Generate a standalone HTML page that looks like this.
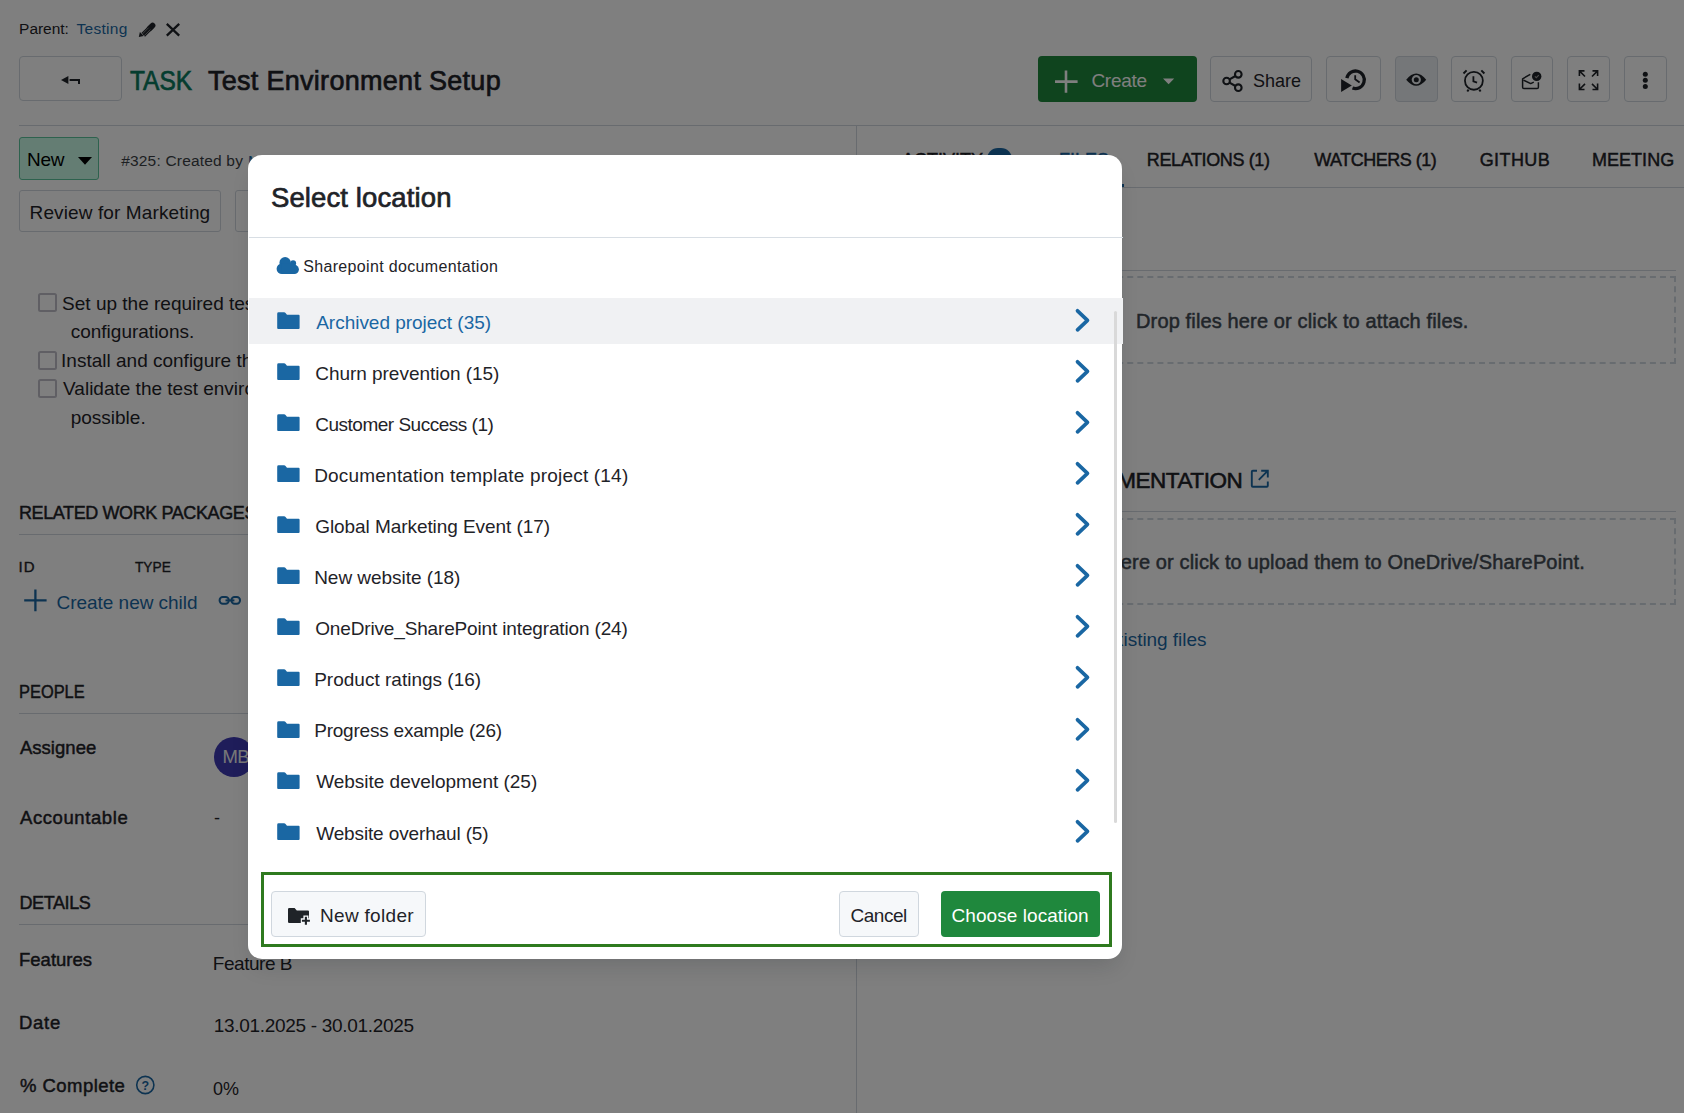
<!DOCTYPE html>
<html><head><meta charset="utf-8"><title>Select location</title>
<style>
html,body{margin:0;padding:0;}
body{width:1684px;height:1113px;overflow:hidden;position:relative;background:#fff;font-family:'Liberation Sans', sans-serif;}
.a{position:absolute;}
.t{position:absolute;white-space:nowrap;}
svg.a{overflow:visible}
</style></head><body>
<div class="t" id="parent" style="left:19.10px;top:21px;font-size:15.5px;line-height:15.5px;font-weight:400;color:#1f2328;letter-spacing:-0.033px;">Parent:</div>
<div class="t" id="testing" style="left:76.40px;top:21px;font-size:15.5px;line-height:15.5px;font-weight:400;color:#1a67a3;letter-spacing:0.317px;">Testing</div>
<svg class="a" style="left:134px;top:18px" width="24" height="24" viewBox="0 0 24 24"><path d="M9.2 16.9 L17.6 8.5" stroke="#1f2328" stroke-width="5.2"/><path d="M15.6 10.5 L18.6 7.5" stroke="#1f2328" stroke-width="5.6" stroke-linecap="round"/><path d="M10.0 17.9 L16.4 11.5 M8.2 16.1 L14.6 9.7" stroke="#9a9a9a" stroke-width="0.8"/><path d="M4.8 19 L5.9 14.1 L9.7 17.9 Z" fill="#1f2328"/></svg>
<svg class="a" style="left:160px;top:18px" width="24" height="24" viewBox="0 0 24 24"><path d="M6.8 5.8 L19.2 17.6 M19.2 5.8 L6.8 17.6" stroke="#1f2328" stroke-width="2.3"/></svg>
<div class="a" style="left:19px;top:56px;width:103px;height:45px;box-sizing:border-box;border:1px solid #d0d7de;border-radius:4px;background:#fff"></div>
<svg class="a" style="left:55px;top:68px" width="32" height="24" viewBox="0 0 32 24"><path d="M6 12 L13.4 8 L13.4 16 Z" fill="#1f2328"/><path d="M14.6 12 H24 V16" fill="none" stroke="#1f2328" stroke-width="2"/></svg>
<div class="t" id="task" style="left:130.00px;top:68px;font-size:27px;line-height:27px;font-weight:400;-webkit-text-stroke:0.68px currentColor;color:#0a7a5e;transform:scaleX(0.905);transform-origin:0 0;">TASK</div>
<div class="t" id="title" style="left:208.00px;top:68px;font-size:27px;line-height:27px;font-weight:400;-webkit-text-stroke:0.68px currentColor;color:#1f2328;letter-spacing:0.286px;">Test Environment Setup</div>
<div class="a" style="left:1038px;top:56px;width:159px;height:46px;background:#1f883d;border-radius:4px"></div>
<svg class="a" style="left:1050px;top:64px" width="32" height="34" viewBox="0 0 32 34"><path d="M16 6.5 V28.8 M5 17.6 H27.6" stroke="#fff" stroke-width="2.6"/></svg>
<div class="t" id="create" style="left:1091.40px;top:71px;font-size:19px;line-height:19px;font-weight:400;color:#ffffff;letter-spacing:-0.280px;">Create</div>
<svg class="a" style="left:1160px;top:74px" width="18" height="14" viewBox="0 0 18 14"><path d="M3 4.5 H14.2 L8.6 10.2 Z" fill="#fff"/></svg>
<div class="a" style="left:1210px;top:56px;width:102px;height:46px;box-sizing:border-box;border:1px solid #d0d7de;border-radius:4px;background:#fff"></div>
<svg class="a" style="left:1218px;top:66px" width="28" height="30" viewBox="0 0 28 30"><g fill="none" stroke="#1f2328" stroke-width="2.1"><circle cx="20.3" cy="8.3" r="3.3"/><circle cx="8.6" cy="15" r="3.3"/><circle cx="20.3" cy="21.7" r="3.3"/><path d="M11.5 13.4 L17.4 10 M11.5 16.6 L17.4 20"/></g></svg>
<div class="t" id="share" style="left:1252.60px;top:71px;font-size:19px;line-height:19px;font-weight:400;color:#1f2328;transform:scaleX(0.9469);transform-origin:0 0;">Share</div>
<div class="a" style="left:1326px;top:56px;width:55px;height:46px;box-sizing:border-box;border:1px solid #d0d7de;border-radius:4px;background:#fff"></div>
<div class="a" style="left:1395px;top:56px;width:43px;height:46px;box-sizing:border-box;border:1px solid #d0d7de;border-radius:4px;background:#eaeef2"></div>
<div class="a" style="left:1451px;top:56px;width:46px;height:46px;box-sizing:border-box;border:1px solid #d0d7de;border-radius:4px;background:#fff"></div>
<div class="a" style="left:1511px;top:56px;width:42px;height:46px;box-sizing:border-box;border:1px solid #d0d7de;border-radius:4px;background:#fff"></div>
<div class="a" style="left:1567px;top:56px;width:43px;height:46px;box-sizing:border-box;border:1px solid #d0d7de;border-radius:4px;background:#fff"></div>
<div class="a" style="left:1624px;top:56px;width:43px;height:46px;box-sizing:border-box;border:1px solid #d0d7de;border-radius:4px;background:#fff"></div>
<svg class="a" style="left:1335px;top:64px" width="40" height="34" viewBox="0 0 40 34"><path d="M11.86 14.12 A8.8 8.8 0 1 1 17.49 24.07" fill="none" stroke="#1f2328" stroke-width="3.3"/><path d="M6.1 15 L6.1 28.1 L16.8 21.4 Z" fill="#1f2328"/><path d="M20.2 11.3 V15.2 L24.6 18.4" fill="none" stroke="#1f2328" stroke-width="1.8"/></svg>
<svg class="a" style="left:1400px;top:64px" width="34" height="32" viewBox="0 0 34 32"><path d="M6.2 15.7 Q16.2 3.4 26.2 15.7 Q16.2 28 6.2 15.7 Z" fill="#1f2328"/><circle cx="16.3" cy="15.7" r="4.6" fill="#eaeef2"/><circle cx="16.3" cy="15.7" r="2.5" fill="#1f2328"/></svg>
<svg class="a" style="left:1456px;top:64px" width="36" height="34" viewBox="0 0 36 34"><g fill="none" stroke="#1f2328" stroke-width="1.8"><circle cx="17.9" cy="16.8" r="8.95"/><path d="M17.4 12.2 V17.3 L21.1 18.6"/><path d="M7.5 9.5 L10.6 6.4 M25.3 6.4 L28.4 9.5 M12.6 25.6 L11.3 27.5 M23.3 25.6 L24.6 27.5" stroke-width="2"/></g></svg>
<svg class="a" style="left:1514px;top:64px" width="36" height="32" viewBox="0 0 36 32"><g fill="none" stroke="#1f2328" stroke-width="1.5" stroke-linejoin="round"><path d="M16.3 10.3 L8.6 14.8 V23.3 Q8.6 24.6 9.9 24.6 H23.1 Q24.4 24.6 24.4 23.3 V18.2"/><path d="M9.4 16.1 L16.7 19.6 L19.8 18.1"/></g><circle cx="22.7" cy="12.4" r="4.7" fill="#1f2328"/><path d="M20.9 12.4 L22.3 13.7 L24.8 11.2" fill="none" stroke="#999" stroke-width="1.1"/></svg>
<svg class="a" style="left:1572px;top:64px" width="32" height="32" viewBox="0 0 32 32"><g fill="none" stroke="#1f2328" stroke-width="1.6"><path d="M7.4 12 V6.9 H12.5 M7.4 6.9 L13 12.5"/><path d="M20.5 6.9 H25.6 V12 M25.6 6.9 L20 12.5"/><path d="M7.4 19.4 V25.5 H12.5 M7.4 25.5 L13 19.9"/><path d="M25.6 19.4 V25.5 H20.5 M25.6 25.5 L20 19.9"/></g></svg>
<svg class="a" style="left:1636px;top:64px" width="18" height="32" viewBox="0 0 18 32"><circle cx="9.3" cy="10.3" r="2.5" fill="#1f2328"/><circle cx="9.3" cy="16.3" r="2.5" fill="#1f2328"/><circle cx="9.3" cy="22.4" r="2.5" fill="#1f2328"/></svg>
<div class="a" style="left:19px;top:125px;width:1665px;height:1px;background:#d0d7de"></div>
<div class="a" style="left:856px;top:125px;width:1px;height:988px;background:#d0d7de"></div>
<div class="a" style="left:19px;top:137px;width:80px;height:43px;box-sizing:border-box;border:1px solid #5cc49c;border-radius:3px;background:#c8fbe6"></div>
<div class="t" id="new" style="left:27.00px;top:150px;font-size:19px;line-height:19px;font-weight:400;color:#000;letter-spacing:-0.250px;">New</div>
<svg class="a" style="left:74px;top:152px" width="22" height="18" viewBox="0 0 22 18"><path d="M4 5 H18 L11 12.8 Z" fill="#000"/></svg>
<div class="t" id="created" style="left:121.20px;top:153px;font-size:15.5px;line-height:15.5px;font-weight:400;color:#3a3f45;letter-spacing:0.187px;">#325: Created by</div>
<div class="t" style="left:248.00px;top:153px;font-size:15.5px;line-height:15.5px;font-weight:400;color:#1a67a3;">M</div>
<div class="a" style="left:19px;top:190px;width:202px;height:41.5px;box-sizing:border-box;border:1px solid #d0d7de;border-radius:3px;background:#fff"></div>
<div class="t" id="review" style="left:29.60px;top:203px;font-size:19px;line-height:19px;font-weight:400;color:#1f2328;letter-spacing:0.111px;">Review for Marketing</div>
<div class="a" style="left:235px;top:190px;width:150px;height:41.5px;box-sizing:border-box;border:1px solid #d0d7de;border-radius:3px;background:#fff"></div>
<div class="t" style="left:247.50px;top:203px;font-size:19px;line-height:19px;font-weight:400;color:#1f2328;">Sprint 1</div>
<div class="a" style="left:38.2px;top:293.4px;width:18.5px;height:18.5px;box-sizing:border-box;border:2px solid #c0bfc9;border-radius:2.5px;background:#fff"></div>
<div class="a" style="left:38.2px;top:351px;width:18.5px;height:18.5px;box-sizing:border-box;border:2px solid #c0bfc9;border-radius:2.5px;background:#fff"></div>
<div class="a" style="left:38.2px;top:379.2px;width:18.5px;height:18.5px;box-sizing:border-box;border:2px solid #c0bfc9;border-radius:2.5px;background:#fff"></div>
<div class="t" id="chk1" style="left:62.10px;top:294px;font-size:19px;line-height:19px;font-weight:400;color:#1f2328;">Set up the required test servers, databases and</div>
<div class="t" id="chk1b" style="left:70.70px;top:322px;font-size:19px;line-height:19px;font-weight:400;color:#1f2328;">configurations.</div>
<div class="t" id="chk2" style="left:61.10px;top:351px;font-size:19px;line-height:19px;font-weight:400;color:#1f2328;">Install and configure the software under test.</div>
<div class="t" id="chk3" style="left:63.10px;top:379px;font-size:19px;line-height:19px;font-weight:400;color:#1f2328;">Validate the test environment as early as</div>
<div class="t" id="chk3b" style="left:70.70px;top:408px;font-size:19px;line-height:19px;font-weight:400;color:#1f2328;">possible.</div>
<div class="t" id="related" style="left:19.00px;top:504px;font-size:18px;line-height:18px;font-weight:400;-webkit-text-stroke:0.45px currentColor;color:#1f2328;letter-spacing:-0.400px;"><span id="relA">RELATED WORK PACKAGE</span>S</div>
<div class="a" style="left:19px;top:534px;width:837px;height:1px;background:#d0d7de"></div>
<div class="t" id="idh" style="left:18.60px;top:559px;font-size:15px;line-height:15px;font-weight:400;-webkit-text-stroke:0.38px currentColor;color:#1f2328;letter-spacing:1.100px;">ID</div>
<div class="t" id="typeh" style="left:135.40px;top:559px;font-size:15px;line-height:15px;font-weight:400;-webkit-text-stroke:0.38px currentColor;color:#1f2328;transform:scaleX(0.9128);transform-origin:0 0;">TYPE</div>
<svg class="a" style="left:20px;top:586px" width="32" height="30" viewBox="0 0 32 30"><path d="M35.4 0 Z" /><path d="M15.4 3.6 V25.2 M4.2 14.4 H26.6" stroke="#1a67a3" stroke-width="2.3"/></svg>
<div class="t" id="cnc" style="left:56.60px;top:593px;font-size:19px;line-height:19px;font-weight:400;color:#1a67a3;letter-spacing:-0.040px;">Create new child</div>
<svg class="a" style="left:212px;top:590px" width="36" height="22" viewBox="0 0 36 22"><g fill="none" stroke="#1a67a3" stroke-width="2"><rect x="7.6" y="7" width="9.2" height="6.7" rx="3.2"/><rect x="19.4" y="7" width="8.6" height="6.7" rx="3.2"/></g><path d="M13.5 10.4 H22.4" stroke="#1a67a3" stroke-width="2"/></svg>
<div class="t" id="people" style="left:19.20px;top:683px;font-size:18px;line-height:18px;font-weight:400;-webkit-text-stroke:0.45px currentColor;color:#1f2328;transform:scaleX(0.9113);transform-origin:0 0;">PEOPLE</div>
<div class="a" style="left:19px;top:713px;width:837px;height:1px;background:#d0d7de"></div>
<div class="t" id="assignee" style="left:19.90px;top:739px;font-size:18.5px;line-height:18.5px;font-weight:400;-webkit-text-stroke:0.46px currentColor;color:#1f2328;letter-spacing:0.043px;">Assignee</div>
<div class="a" style="left:214.2px;top:736.8px;width:40px;height:40px;border-radius:50%;background:#3f3ab5"></div>
<div class="t" style="left:222.50px;top:748px;font-size:18.5px;line-height:18.5px;font-weight:400;color:#f0f0f0;letter-spacing:-0.600px;">MB</div>
<div class="t" id="acc" style="left:20.00px;top:809px;font-size:18.5px;line-height:18.5px;font-weight:400;-webkit-text-stroke:0.46px currentColor;color:#1f2328;letter-spacing:0.590px;">Accountable</div>
<div class="t" style="left:214.00px;top:809px;font-size:18px;line-height:18px;font-weight:400;color:#1f2328;">-</div>
<div class="t" id="details" style="left:19.40px;top:894px;font-size:18px;line-height:18px;font-weight:400;-webkit-text-stroke:0.45px currentColor;color:#1f2328;letter-spacing:-0.383px;">DETAILS</div>
<div class="a" style="left:19px;top:924px;width:837px;height:1px;background:#d0d7de"></div>
<div class="t" id="features" style="left:19.00px;top:951px;font-size:18.5px;line-height:18.5px;font-weight:400;-webkit-text-stroke:0.46px currentColor;color:#1f2328;">Features</div>
<div class="t" id="featb" style="left:212.80px;top:954px;font-size:19px;line-height:19px;font-weight:400;color:#1f2328;letter-spacing:-0.462px;">Feature B</div>
<div class="t" id="datel" style="left:19.00px;top:1014px;font-size:18.5px;line-height:18.5px;font-weight:400;-webkit-text-stroke:0.46px currentColor;color:#1f2328;letter-spacing:0.700px;">Date</div>
<div class="t" id="date" style="left:213.80px;top:1016px;font-size:19px;line-height:19px;font-weight:400;color:#1f2328;letter-spacing:-0.314px;">13.01.2025 - 30.01.2025</div>
<div class="t" id="pct" style="left:20.00px;top:1077px;font-size:18.5px;line-height:18.5px;font-weight:400;-webkit-text-stroke:0.46px currentColor;color:#1f2328;letter-spacing:0.456px;">% Complete</div>
<svg class="a" style="left:130px;top:1070px" width="32" height="32" viewBox="0 0 32 32"><circle cx="15.3" cy="15" r="8.6" fill="none" stroke="#1a67a3" stroke-width="1.6"/><text x="15.3" y="19.6" text-anchor="middle" font-family="Liberation Sans" font-weight="700" font-size="12.5" fill="#1a67a3">?</text></svg>
<div class="t" id="zero" style="left:212.70px;top:1079px;font-size:19px;line-height:19px;font-weight:400;color:#1f2328;transform:scaleX(0.9462);transform-origin:0 0;">0%</div>
<div class="t" style="left:902.00px;top:151px;font-size:18px;line-height:18px;font-weight:400;-webkit-text-stroke:0.45px currentColor;color:#1f2328;">ACTIVITY</div>
<div class="a" style="left:987px;top:148px;width:25px;height:22px;border-radius:11px;background:#1a67a3"></div>
<div class="t" style="left:1059.00px;top:151px;font-size:18px;line-height:18px;font-weight:400;-webkit-text-stroke:0.45px currentColor;color:#1a67a3;">FILES</div>
<div class="a" style="left:1040px;top:184px;width:84px;height:3px;background:#1a67a3"></div>
<div class="t" id="relations" style="left:1146.80px;top:151px;font-size:18px;line-height:18px;font-weight:400;-webkit-text-stroke:0.45px currentColor;color:#1f2328;letter-spacing:-0.383px;">RELATIONS (1)</div>
<div class="t" id="watchers" style="left:1314.20px;top:151px;font-size:18px;line-height:18px;font-weight:400;-webkit-text-stroke:0.45px currentColor;color:#1f2328;letter-spacing:-0.491px;">WATCHERS (1)</div>
<div class="t" id="github" style="left:1479.70px;top:151px;font-size:18px;line-height:18px;font-weight:400;-webkit-text-stroke:0.45px currentColor;color:#1f2328;letter-spacing:0.400px;">GITHUB</div>
<div class="t" id="meeting" style="left:1591.90px;top:151px;font-size:18px;line-height:18px;font-weight:400;-webkit-text-stroke:0.45px currentColor;color:#1f2328;letter-spacing:0.050px;">MEETING</div>
<div class="a" style="left:857px;top:187px;width:827px;height:1px;background:#d0d7de"></div>
<div class="a" style="left:876px;top:270px;width:800px;height:1px;background:#d0d7de"></div>
<div class="a" style="left:876px;top:276px;width:800px;height:88px;box-sizing:border-box;border:2px dashed #d1d9e0"></div>
<div class="t" id="drop" style="left:1136.00px;top:311px;font-size:20px;line-height:20px;font-weight:400;-webkit-text-stroke:0.50px currentColor;color:#424a53;letter-spacing:0.140px;">Drop files here or click to attach files.</div>
<div class="t" id="spdoc" style="left:905.60px;top:470px;font-size:22.5px;line-height:22.5px;font-weight:400;-webkit-text-stroke:0.56px currentColor;color:#1f2328;letter-spacing:-0.450px;">SHAREPOINT DOCUMENTATION</div>
<svg class="a" style="left:1246px;top:465px" width="28" height="28" viewBox="0 0 28 28"><path d="M11 5.8 H6.8 Q5.8 5.8 5.8 6.8 V20.8 Q5.8 21.8 6.8 21.8 H20.8 Q21.8 21.8 21.8 20.8 V16.5" fill="none" stroke="#1a67a3" stroke-width="1.9"/><path d="M12.8 14.8 L21.4 6.2 M15.2 5.8 H21.8 V12.4" fill="none" stroke="#1a67a3" stroke-width="1.9"/></svg>
<div class="a" style="left:876px;top:511px;width:800px;height:1px;background:#d0d7de"></div>
<div class="a" style="left:876px;top:518px;width:800px;height:87px;box-sizing:border-box;border:2px dashed #d1d9e0"></div>
<div class="t" id="upload" style="left:1018.00px;top:552px;font-size:20px;line-height:20px;font-weight:400;-webkit-text-stroke:0.50px currentColor;color:#424a53;letter-spacing:0.140px;">Drop files here or click to upload them to OneDrive/SharePoint.</div>
<div class="t" id="link" style="left:1063.70px;top:630px;font-size:19px;line-height:19px;font-weight:400;color:#1a67a3;letter-spacing:-0.050px;">Link existing files</div>
<div class="a" style="left:0px;top:0px;width:1684px;height:1113px;background:rgba(0,0,0,0.5)"></div>
<div class="a" id="modal" style="left:248.2px;top:154.5px;width:874px;height:804px;background:#fff;border-radius:14px;box-shadow:0 12px 22px -6px rgba(20,24,28,0.16)"></div>
<div class="a" style="left:248.5px;top:237px;width:874px;height:1px;background:#d8dee4"></div>
<div class="a" style="left:248.5px;top:298px;width:874px;height:46px;background:#f0f1f3"></div>
<div class="t" id="mtitle" style="left:271.00px;top:184px;font-size:27.5px;line-height:27.5px;font-weight:400;-webkit-text-stroke:0.69px currentColor;color:#1f2328;letter-spacing:0.114px;">Select location</div>
<svg class="a" style="left:272px;top:252px" width="32" height="28" viewBox="0 0 32 28"><g fill="#1a67a3"><circle cx="13.1" cy="10.7" r="5.7"/><circle cx="21.1" cy="11.2" r="3"/><circle cx="22.3" cy="17.4" r="4.6"/><circle cx="9.9" cy="16.7" r="5.3"/><rect x="9.9" y="11.5" width="12.4" height="10.5"/></g></svg>
<div class="t" id="crumb" style="left:303.20px;top:259px;font-size:16px;line-height:16px;font-weight:400;color:#1f2328;letter-spacing:0.339px;">Sharepoint documentation</div>
<svg class="a" style="left:272px;top:306.0px" width="32" height="28" viewBox="0 0 32 28"><path d="M6.6 6.3 H12.2 Q12.9 6.3 13.3 6.8 L15 8.7 H26.6 Q27.6 8.7 27.6 9.7 V22.1 Q27.6 23.1 26.6 23.1 H6.2 Q5.2 23.1 5.2 22.1 V7.7 Q5.2 6.3 6.6 6.3 Z" fill="#1a67a3"/></svg>
<div class="t" id="row0" style="left:316.20px;top:313px;font-size:19px;line-height:19px;font-weight:400;color:#1a67a3;letter-spacing:-0.020px;">Archived project (35)</div>
<svg class="a" style="left:1068px;top:304.0px" width="30" height="32" viewBox="0 0 30 32"><path d="M9.5 6.8 L19.5 16.3 L9.5 25.8" fill="none" stroke="#1a67a3" stroke-width="3.7" stroke-linecap="round" stroke-linejoin="round"/></svg>
<svg class="a" style="left:272px;top:357.07px" width="32" height="28" viewBox="0 0 32 28"><path d="M6.6 6.3 H12.2 Q12.9 6.3 13.3 6.8 L15 8.7 H26.6 Q27.6 8.7 27.6 9.7 V22.1 Q27.6 23.1 26.6 23.1 H6.2 Q5.2 23.1 5.2 22.1 V7.7 Q5.2 6.3 6.6 6.3 Z" fill="#1a67a3"/></svg>
<div class="t" id="row1" style="left:315.20px;top:364px;font-size:19px;line-height:19px;font-weight:400;color:#1f2328;letter-spacing:-0.030px;">Churn prevention (15)</div>
<svg class="a" style="left:1068px;top:355.07px" width="30" height="32" viewBox="0 0 30 32"><path d="M9.5 6.8 L19.5 16.3 L9.5 25.8" fill="none" stroke="#1a67a3" stroke-width="3.7" stroke-linecap="round" stroke-linejoin="round"/></svg>
<svg class="a" style="left:272px;top:408.14px" width="32" height="28" viewBox="0 0 32 28"><path d="M6.6 6.3 H12.2 Q12.9 6.3 13.3 6.8 L15 8.7 H26.6 Q27.6 8.7 27.6 9.7 V22.1 Q27.6 23.1 26.6 23.1 H6.2 Q5.2 23.1 5.2 22.1 V7.7 Q5.2 6.3 6.6 6.3 Z" fill="#1a67a3"/></svg>
<div class="t" id="row2" style="left:315.20px;top:415px;font-size:19px;line-height:19px;font-weight:400;color:#1f2328;letter-spacing:-0.489px;">Customer Success (1)</div>
<svg class="a" style="left:1068px;top:406.14px" width="30" height="32" viewBox="0 0 30 32"><path d="M9.5 6.8 L19.5 16.3 L9.5 25.8" fill="none" stroke="#1a67a3" stroke-width="3.7" stroke-linecap="round" stroke-linejoin="round"/></svg>
<svg class="a" style="left:272px;top:459.21px" width="32" height="28" viewBox="0 0 32 28"><path d="M6.6 6.3 H12.2 Q12.9 6.3 13.3 6.8 L15 8.7 H26.6 Q27.6 8.7 27.6 9.7 V22.1 Q27.6 23.1 26.6 23.1 H6.2 Q5.2 23.1 5.2 22.1 V7.7 Q5.2 6.3 6.6 6.3 Z" fill="#1a67a3"/></svg>
<div class="t" id="row3" style="left:314.20px;top:466px;font-size:19px;line-height:19px;font-weight:400;color:#1f2328;letter-spacing:0.197px;">Documentation template project (14)</div>
<svg class="a" style="left:1068px;top:457.21px" width="30" height="32" viewBox="0 0 30 32"><path d="M9.5 6.8 L19.5 16.3 L9.5 25.8" fill="none" stroke="#1a67a3" stroke-width="3.7" stroke-linecap="round" stroke-linejoin="round"/></svg>
<svg class="a" style="left:272px;top:510.28px" width="32" height="28" viewBox="0 0 32 28"><path d="M6.6 6.3 H12.2 Q12.9 6.3 13.3 6.8 L15 8.7 H26.6 Q27.6 8.7 27.6 9.7 V22.1 Q27.6 23.1 26.6 23.1 H6.2 Q5.2 23.1 5.2 22.1 V7.7 Q5.2 6.3 6.6 6.3 Z" fill="#1a67a3"/></svg>
<div class="t" id="row4" style="left:315.20px;top:517px;font-size:19px;line-height:19px;font-weight:400;color:#1f2328;letter-spacing:-0.065px;">Global Marketing Event (17)</div>
<svg class="a" style="left:1068px;top:508.28px" width="30" height="32" viewBox="0 0 30 32"><path d="M9.5 6.8 L19.5 16.3 L9.5 25.8" fill="none" stroke="#1a67a3" stroke-width="3.7" stroke-linecap="round" stroke-linejoin="round"/></svg>
<svg class="a" style="left:272px;top:561.35px" width="32" height="28" viewBox="0 0 32 28"><path d="M6.6 6.3 H12.2 Q12.9 6.3 13.3 6.8 L15 8.7 H26.6 Q27.6 8.7 27.6 9.7 V22.1 Q27.6 23.1 26.6 23.1 H6.2 Q5.2 23.1 5.2 22.1 V7.7 Q5.2 6.3 6.6 6.3 Z" fill="#1a67a3"/></svg>
<div class="t" id="row5" style="left:314.20px;top:568px;font-size:19px;line-height:19px;font-weight:400;color:#1f2328;letter-spacing:-0.040px;">New website (18)</div>
<svg class="a" style="left:1068px;top:559.35px" width="30" height="32" viewBox="0 0 30 32"><path d="M9.5 6.8 L19.5 16.3 L9.5 25.8" fill="none" stroke="#1a67a3" stroke-width="3.7" stroke-linecap="round" stroke-linejoin="round"/></svg>
<svg class="a" style="left:272px;top:612.42px" width="32" height="28" viewBox="0 0 32 28"><path d="M6.6 6.3 H12.2 Q12.9 6.3 13.3 6.8 L15 8.7 H26.6 Q27.6 8.7 27.6 9.7 V22.1 Q27.6 23.1 26.6 23.1 H6.2 Q5.2 23.1 5.2 22.1 V7.7 Q5.2 6.3 6.6 6.3 Z" fill="#1a67a3"/></svg>
<div class="t" id="row6" style="left:315.20px;top:619px;font-size:19px;line-height:19px;font-weight:400;color:#1f2328;letter-spacing:-0.151px;">OneDrive_SharePoint integration (24)</div>
<svg class="a" style="left:1068px;top:610.42px" width="30" height="32" viewBox="0 0 30 32"><path d="M9.5 6.8 L19.5 16.3 L9.5 25.8" fill="none" stroke="#1a67a3" stroke-width="3.7" stroke-linecap="round" stroke-linejoin="round"/></svg>
<svg class="a" style="left:272px;top:663.49px" width="32" height="28" viewBox="0 0 32 28"><path d="M6.6 6.3 H12.2 Q12.9 6.3 13.3 6.8 L15 8.7 H26.6 Q27.6 8.7 27.6 9.7 V22.1 Q27.6 23.1 26.6 23.1 H6.2 Q5.2 23.1 5.2 22.1 V7.7 Q5.2 6.3 6.6 6.3 Z" fill="#1a67a3"/></svg>
<div class="t" id="row7" style="left:314.20px;top:670px;font-size:19px;line-height:19px;font-weight:400;color:#1f2328;letter-spacing:0.005px;">Product ratings (16)</div>
<svg class="a" style="left:1068px;top:661.49px" width="30" height="32" viewBox="0 0 30 32"><path d="M9.5 6.8 L19.5 16.3 L9.5 25.8" fill="none" stroke="#1a67a3" stroke-width="3.7" stroke-linecap="round" stroke-linejoin="round"/></svg>
<svg class="a" style="left:272px;top:714.56px" width="32" height="28" viewBox="0 0 32 28"><path d="M6.6 6.3 H12.2 Q12.9 6.3 13.3 6.8 L15 8.7 H26.6 Q27.6 8.7 27.6 9.7 V22.1 Q27.6 23.1 26.6 23.1 H6.2 Q5.2 23.1 5.2 22.1 V7.7 Q5.2 6.3 6.6 6.3 Z" fill="#1a67a3"/></svg>
<div class="t" id="row8" style="left:314.20px;top:721px;font-size:19px;line-height:19px;font-weight:400;color:#1f2328;letter-spacing:-0.215px;">Progress example (26)</div>
<svg class="a" style="left:1068px;top:712.56px" width="30" height="32" viewBox="0 0 30 32"><path d="M9.5 6.8 L19.5 16.3 L9.5 25.8" fill="none" stroke="#1a67a3" stroke-width="3.7" stroke-linecap="round" stroke-linejoin="round"/></svg>
<svg class="a" style="left:272px;top:765.63px" width="32" height="28" viewBox="0 0 32 28"><path d="M6.6 6.3 H12.2 Q12.9 6.3 13.3 6.8 L15 8.7 H26.6 Q27.6 8.7 27.6 9.7 V22.1 Q27.6 23.1 26.6 23.1 H6.2 Q5.2 23.1 5.2 22.1 V7.7 Q5.2 6.3 6.6 6.3 Z" fill="#1a67a3"/></svg>
<div class="t" id="row9" style="left:316.20px;top:772px;font-size:19px;line-height:19px;font-weight:400;color:#1f2328;letter-spacing:-0.017px;">Website development (25)</div>
<svg class="a" style="left:1068px;top:763.63px" width="30" height="32" viewBox="0 0 30 32"><path d="M9.5 6.8 L19.5 16.3 L9.5 25.8" fill="none" stroke="#1a67a3" stroke-width="3.7" stroke-linecap="round" stroke-linejoin="round"/></svg>
<svg class="a" style="left:272px;top:816.7px" width="32" height="28" viewBox="0 0 32 28"><path d="M6.6 6.3 H12.2 Q12.9 6.3 13.3 6.8 L15 8.7 H26.6 Q27.6 8.7 27.6 9.7 V22.1 Q27.6 23.1 26.6 23.1 H6.2 Q5.2 23.1 5.2 22.1 V7.7 Q5.2 6.3 6.6 6.3 Z" fill="#1a67a3"/></svg>
<div class="t" id="row10" style="left:316.20px;top:824px;font-size:19px;line-height:19px;font-weight:400;color:#1f2328;letter-spacing:-0.132px;">Website overhaul (5)</div>
<svg class="a" style="left:1068px;top:814.7px" width="30" height="32" viewBox="0 0 30 32"><path d="M9.5 6.8 L19.5 16.3 L9.5 25.8" fill="none" stroke="#1a67a3" stroke-width="3.7" stroke-linecap="round" stroke-linejoin="round"/></svg>
<div class="a" style="left:1114.2px;top:311px;width:2.8px;height:512px;background:#d9d9d9;border-radius:2px"></div>
<div class="a" style="left:261px;top:872px;width:851px;height:75px;box-sizing:border-box;border:3px solid #2f7a1f"></div>
<div class="a" style="left:271.2px;top:891px;width:154.6px;height:46px;box-sizing:border-box;border:1px solid #d0d7de;border-radius:4px;background:#f6f8fa"></div>
<div class="a" style="left:839.2px;top:891.2px;width:79.5px;height:45.4px;box-sizing:border-box;border:1px solid #d0d7de;border-radius:4px;background:#f6f8fa"></div>
<div class="a" style="left:941px;top:891px;width:158.8px;height:45.8px;background:#1f883d;border-radius:4px"></div>
<svg class="a" style="left:282px;top:900px" width="34" height="30" viewBox="0 0 34 30"><path d="M7.2 8 H12.6 L14.8 10.4 H26 Q27 10.4 27 11.4 V23 H7.2 Q6 23 6 21.8 V9.2 Q6 8 7.2 8 Z" fill="#1f2328"/><path d="M23.9 15.6 V25.8 M18.8 20.7 H29" stroke="#f6f8fa" stroke-width="5"/><path d="M23.9 16.7 V24.7 M19.9 20.7 H27.9" stroke="#1f2328" stroke-width="2.1"/></svg>
<div class="t" id="newfolder" style="left:320.00px;top:906px;font-size:19px;line-height:19px;font-weight:400;color:#1f2328;letter-spacing:0.311px;">New folder</div>
<div class="t" id="cancel" style="left:850.50px;top:906px;font-size:19px;line-height:19px;font-weight:400;color:#1f2328;letter-spacing:-0.480px;">Cancel</div>
<div class="t" id="choose" style="left:951.60px;top:906px;font-size:19px;line-height:19px;font-weight:400;color:#fff;letter-spacing:0.057px;">Choose location</div>
</body></html>
